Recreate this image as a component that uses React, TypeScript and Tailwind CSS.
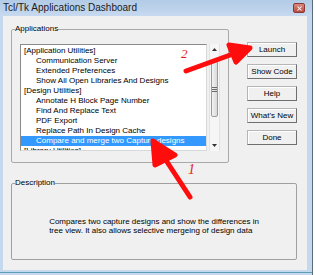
import { X } from 'lucide-react'

const items: { label: string; group?: boolean; selected?: boolean }[] = [
  { label: '[Application Utilities]', group: true },
  { label: 'Communication Server' },
  { label: 'Extended Preferences' },
  { label: 'Show All Open Libraries And Designs' },
  { label: '[Design Utilities]', group: true },
  { label: 'Annotate H Block Page Number' },
  { label: 'Find And Replace Text' },
  { label: 'PDF Export' },
  { label: 'Replace Path In Design Cache' },
  { label: 'Compare and merge two Capture designs', selected: true },
  { label: '[Library Utilities]', group: true },
]

const buttons = ['Launch', 'Show Code', 'Help', "What's New", 'Done']

function Scrollbar() {
  return (
    <div className="flex h-[107px] w-[11px] flex-col border-x border-[#e3e3e3] bg-[#f6f6f6]">
      <div className="flex h-[11px] items-center justify-center">
        <svg width="5" height="3" viewBox="0 0 5 3">
          <path d="M0 3 L2.5 0 L5 3 Z" fill="#333" />
        </svg>
      </div>
      <div className="mx-[1px] mt-[6px] flex h-[56px] flex-col items-center justify-center gap-[1px] rounded-[2px] border border-[#9c9c9c] bg-gradient-to-r from-[#f3f3f3] to-[#d9d9d9]">
        <div className="h-px w-[5px] bg-[#6b6b6b]" />
        <div className="h-px w-[5px] bg-[#6b6b6b]" />
        <div className="h-px w-[5px] bg-[#6b6b6b]" />
      </div>
      <div className="mt-auto flex h-[11px] items-center justify-center">
        <svg width="5" height="3" viewBox="0 0 5 3">
          <path d="M0 0 L2.5 3 L5 0 Z" fill="#333" />
        </svg>
      </div>
    </div>
  )
}

export default function App() {
  return (
    <div className="relative flex h-[275px] w-[315px] overflow-hidden bg-white font-['Liberation_Sans',Arial,sans-serif] text-black">
      <div className="flex h-[275px] w-[313px] flex-col border-r border-[#5b6b7c] bg-[#c4d8ee]">
        {/* title bar */}
        <div className="flex h-[16px] items-center justify-between bg-gradient-to-b from-[#b2cbe6] to-[#c6d9ef] pl-[3px] pr-[7px]">
          <span className="text-[10px] leading-[12px] text-[#1b1b1b]">Tcl/Tk Applications Dashboard</span>
          <div className="flex h-[10px] w-[12px] items-center justify-center rounded-[2px] border border-[#8a3a34] bg-gradient-to-b from-[#d98a80] to-[#b94a3e]">
            <X size={7} strokeWidth={3.5} color="#ffffff" />
          </div>
        </div>

        {/* client area */}
        <div className="ml-[3px] h-[254px] w-[304px] bg-[#f0f0f0] pl-[8px] pt-[8px]">
          <div className="flex">
            <fieldset className="h-[139px] w-[218px] rounded-[2px] border border-[#a9a9a9]">
              <legend className="ml-[3px] text-[8px] leading-[10px]">Applications</legend>
              <div className="ml-[8px] mt-[10px] flex gap-[2px]">
                <div className="h-[107px] w-[187px] overflow-hidden border border-[#8a8a8a] border-b-[#d8d8d8] border-r-[#d8d8d8] bg-white pt-[0.5px]">
                  {items.map((item) => (
                    <div
                      key={item.label}
                      className={`h-[10px] whitespace-nowrap text-[8px] leading-[10px] ${item.group ? 'pl-[3px]' : 'pl-[15px]'} ${item.selected ? 'bg-[#3399ff] text-white' : ''}`}
                    >
                      {item.label}
                    </div>
                  ))}
                </div>
                <Scrollbar />
              </div>
            </fieldset>

            <div className="ml-[18px] mt-[18px] flex flex-col gap-[7px]">
              {buttons.map((b) => (
                <div
                  key={b}
                  className="flex h-[15px] w-[50px] items-center justify-center border border-[#b5b5b5] border-b-[#6f6f6f] border-r-[#6f6f6f] bg-[#f0f0f0] text-[8px] leading-[10px] shadow-[inset_1px_1px_0_#ffffff]"
                >
                  {b}
                </div>
              ))}
            </div>
          </div>

          <fieldset className="mt-[15px] h-[82px] w-[286px] rounded-[2px] border border-[#a0a0a0]">
            <legend className="ml-[3px] text-[8px] leading-[10px]">Description</legend>
            <div className="flex h-[71px] items-center justify-center pt-[4px]">
              <p className="text-[8px] leading-[9px]">
                Compares two capture designs and show the differences in
                <br />
                tree view. It also allows selective mergeing of design data
              </p>
            </div>
          </fieldset>
        </div>

        <div className="mt-[2px] h-[1px] bg-[#5f9cb6]" />
      </div>

      {/* annotations drawn over the screenshot */}
      <svg className="pointer-events-none absolute inset-0" width="315" height="275" viewBox="0 0 315 275">
        <g stroke="#ff0d0d" strokeWidth="5" strokeLinecap="round" strokeLinejoin="round" fill="#ff0d0d">
          <path d="M186 71 L244 50" fill="none" />
          <path d="M229 45 L250 48 L236 62 Z" />
          <path d="M190 197 L156 145" fill="none" />
          <path d="M155 165 L153 141 L175 155 Z" />
        </g>
        <text x="181" y="58" fontFamily="Liberation Serif, serif" fontStyle="italic" fontSize="13" fill="#e61a1a">2</text>
        <text x="188" y="174" fontFamily="Liberation Serif, serif" fontStyle="italic" fontSize="14" fill="#e61a1a">1</text>
      </svg>
    </div>
  )
}
